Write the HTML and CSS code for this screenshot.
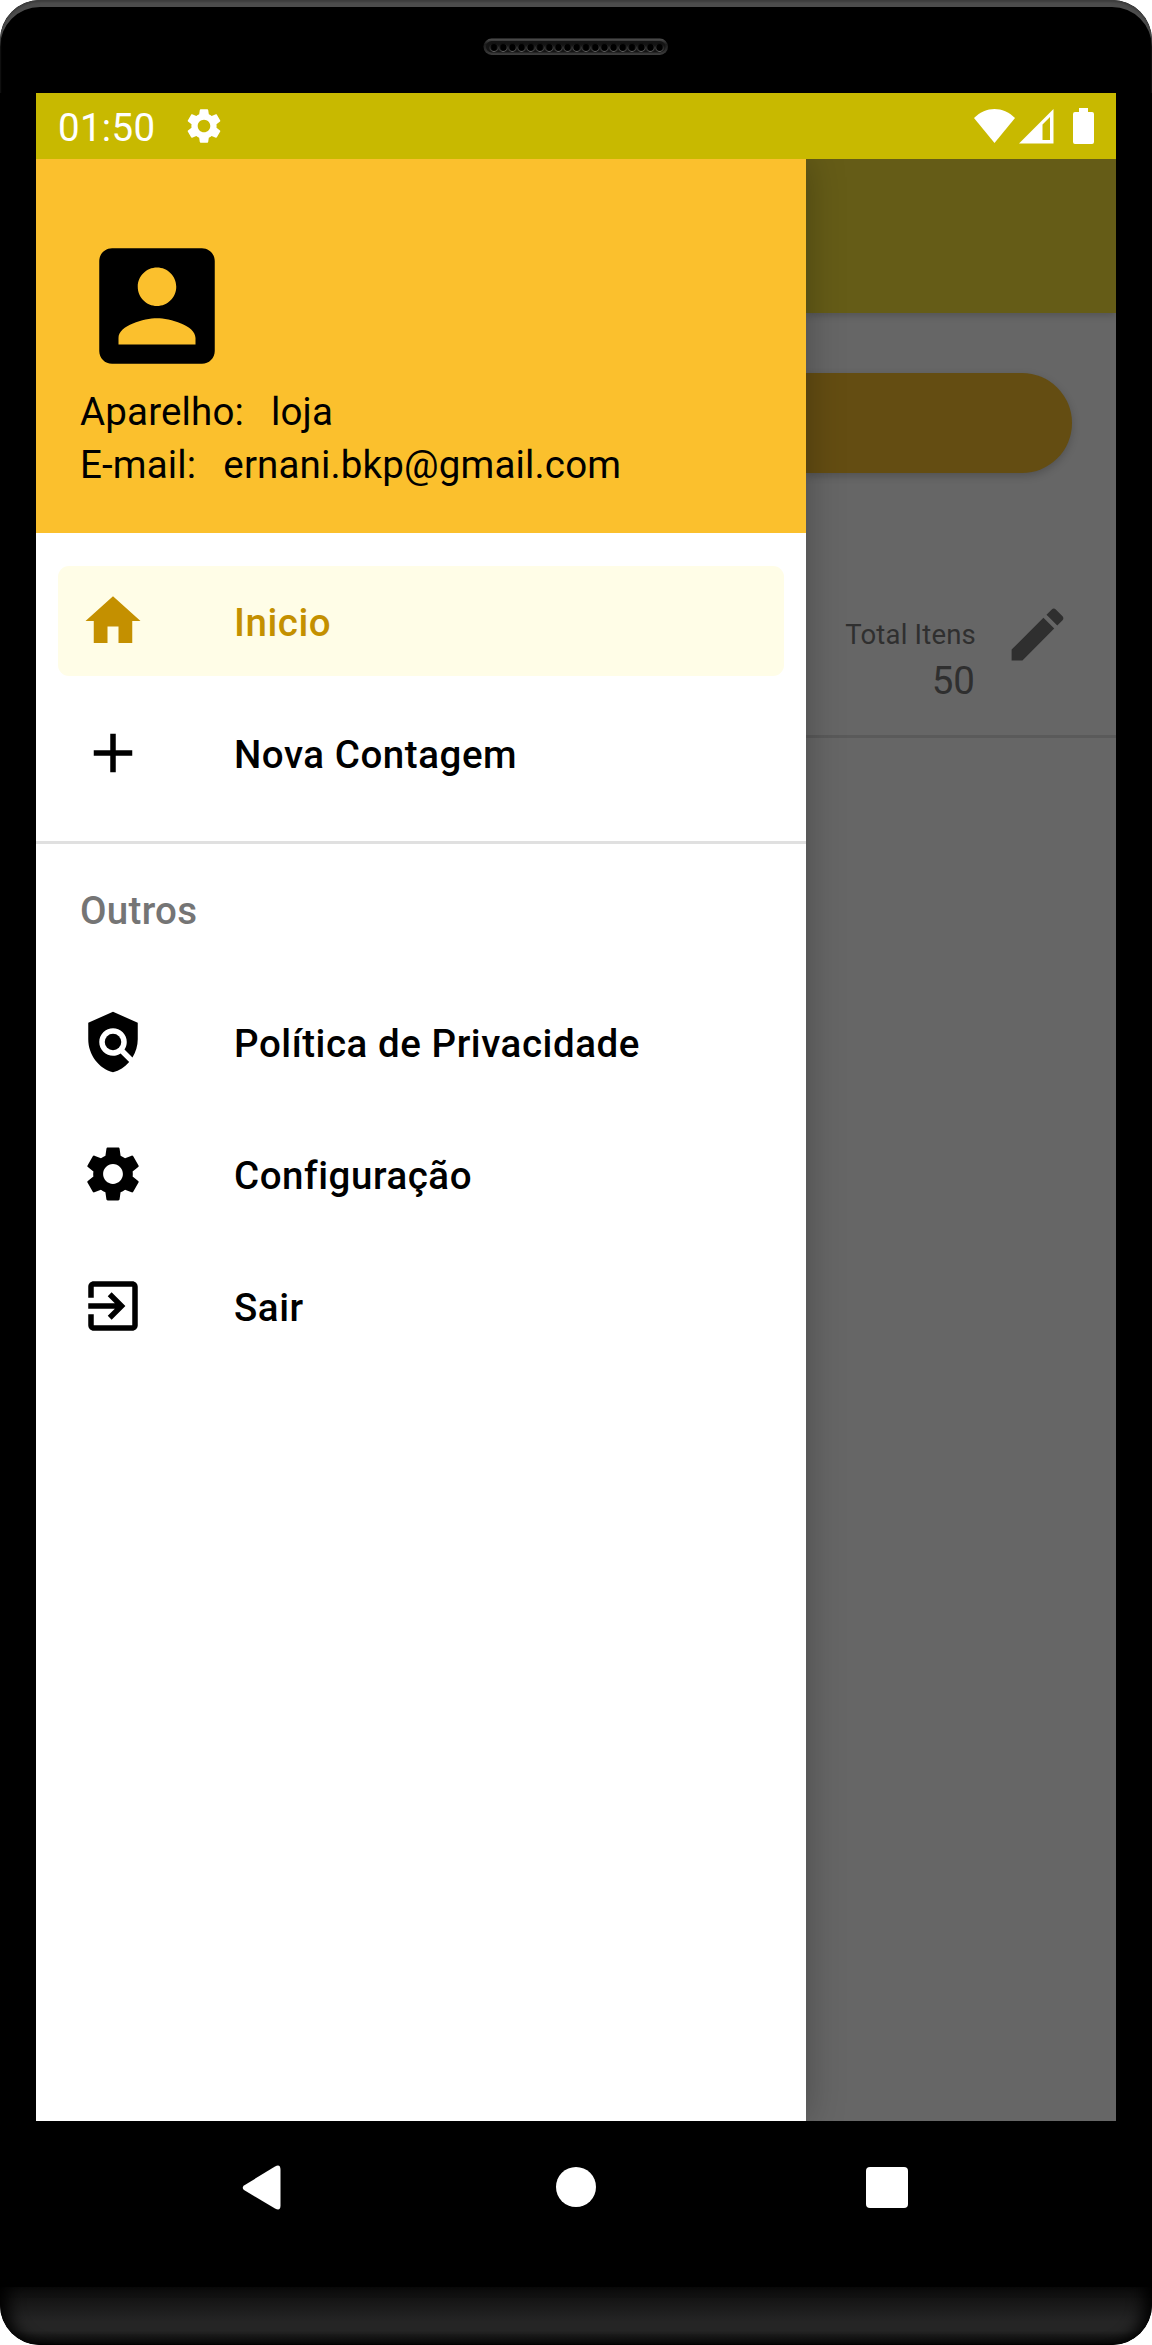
FILE: index.html
```html
<!DOCTYPE html>
<html lang="pt-BR">
<head>
<meta charset="utf-8">
<title>Contagem</title>
<link rel="stylesheet" href="styles.css">
</head>
<body>
<div class="phone">
  <div class="bezel">
    <svg class="speaker" width="186" height="18" viewBox="0 0 186 18">
      <defs>
        <linearGradient id="rim" x1="0" y1="0" x2="0" y2="1"><stop offset="0" stop-color="#505050"/><stop offset=".35" stop-color="#1c1c1c"/><stop offset="1" stop-color="#3c3c3c"/></linearGradient>
        <linearGradient id="hole" x1="0" y1="0" x2="0" y2="1"><stop offset="0" stop-color="#111"/><stop offset="1" stop-color="#666"/></linearGradient>
        <pattern id="holes" x="6.4" y="0" width="9.2" height="18" patternUnits="userSpaceOnUse"><circle cx="4.6" cy="9.500" r="3.900" fill="#000" stroke="url(#hole)" stroke-width="1"/></pattern>
      </defs>
      <rect x=".5" y=".5" width="184.500" height="16.500" rx="8.200" fill="url(#rim)"/>
      <rect x="3" y="3" width="179.500" height="11.500" rx="5.700" fill="#141414"/>
      <rect x="6.400" y="0" width="174.800" height="18" fill="url(#holes)"/>
    </svg>
  </div>

  <div class="screen">
    <header class="status">
      <span class="clock">01:50</span>
      <svg class="status-gear" viewBox="0 0 24 24"><use href="#gear"/></svg>
      <svg class="wifi" width="41" height="34" viewBox="0 0 41 34"><path d="M0 9C12-3 29-3 41 9L20.500 34Z"/></svg>
      <svg class="signal" width="35" height="35" viewBox="0 0 35 35"><path fill-rule="evenodd" d="M0 34.500L34.500 0V34.500ZM23.500 15.500V31H31V8Z"/></svg>
      <svg class="battery" width="21" height="36" viewBox="0 0 21 36"><path d="M6 0h9v4h4q2 0 2 2v28q0 2-2 2H2q-2 0-2-2V6q0-2 2-2h4Z"/></svg>
    </header>

    <div class="body">
      <aside class="drawer">
        <div class="account">
          <svg class="avatar" viewBox="0 0 24 24"><path d="M3 5v14c0 1.100.89 2 2 2h14c1.100 0 2-.9 2-2V5c0-1.100-.9-2-2-2H5c-1.110 0-2 .9-2 2zm12 4c0 1.660-1.340 3-3 3s-3-1.340-3-3 1.340-3 3-3 3 1.340 3 3zm-9 8c0-2 4-3.100 6-3.100s6 1.100 6 3.100v1H6v-1z"/></svg>
          <div class="field"><span>Aparelho:</span><span class="device">loja</span></div>
          <div class="field"><span>E-mail:</span><span class="email">ernani.bkp@gmail.com</span></div>
        </div>
        <nav class="menu">
          <a class="item active"><svg viewBox="0 0 24 24"><path d="M10 20v-6h4v6h5v-8h3L12 3 2 12h3v8z"/></svg><span>Inicio</span></a>
          <a class="item"><svg viewBox="0 0 24 24"><path d="M19 13h-6v6h-2v-6H5v-2h6V5h2v6h6v2z"/></svg><span>Nova Contagem</span></a>
        </nav>
        <nav class="menu others">
          <h2 class="group">Outros</h2>
          <a class="item"><svg viewBox="0 0 24 24"><path d="M21 5l-9-4-9 4v6c0 5.550 3.840 10.740 9 12 2.300-.56 4.330-1.900 5.880-3.710l-3.120-3.120c-1.940 1.290-4.580 1.070-6.290-.64-1.950-1.950-1.950-5.120 0-7.070 1.950-1.950 5.120-1.950 7.070 0 1.710 1.710 1.920 4.350.64 6.290l2.900 2.900C20.290 15.690 21 13.380 21 11V5z"/><circle cx="12" cy="12" r="3"/></svg><span>Política de Privacidade</span></a>
          <a class="item"><svg viewBox="0 0 24 24"><path id="gear" d="M19.140 12.940c.04-.3.060-.61.060-.94 0-.32-.02-.64-.07-.94l2.030-1.580c.18-.14.230-.41.120-.61l-1.920-3.320c-.12-.22-.37-.29-.59-.22l-2.390.96c-.5-.38-1.030-.7-1.620-.94l-.36-2.540c-.04-.24-.24-.41-.48-.41h-3.840c-.24 0-.43.170-.47.410l-.36 2.540c-.59.240-1.130.570-1.620.940l-2.390-.96c-.22-.08-.47 0-.59.220L2.740 8.870c-.12.210-.08.470.12.610l2.030 1.580c-.05.300-.09.630-.09.940s.020.640.070.940l-2.030 1.580c-.18.140-.23.410-.12.610l1.920 3.320c.12.220.37.290.59.220l2.390-.96c.5.380 1.030.7 1.620.94l.36 2.540c.05.240.24.410.48.410h3.840c.24 0 .44-.17.470-.41l.36-2.540c.59-.24 1.130-.56 1.620-.94l2.390.96c.22.080.47 0 .59-.22l1.920-3.320c.12-.22.070-.47-.12-.61l-2.010-1.580zM12 15.600c-1.980 0-3.600-1.620-3.600-3.600s1.620-3.600 3.600-3.600 3.600 1.620 3.600 3.600-1.620 3.600-3.600 3.600z"/></svg><span>Configuração</span></a>
          <a class="item"><svg viewBox="0 0 24 24"><path d="M10.090 15.590L11.500 17l5-5-5-5-1.410 1.410L12.670 11H3v2h9.670l-2.580 2.590zM19 3H5c-1.110 0-2 .9-2 2v4h2V5h14v14H5v-4H3v4c0 1.100.89 2 2 2h14c1.100 0 2-.9 2-2V5c0-1.100-.9-2-2-2z"/></svg><span>Sair</span></a>
        </nav>
      </aside>

      <main class="content">
        <div class="toolbar"></div>
        <div class="action"></div>
        <section class="row">
          <div class="total"><span class="label">Total Itens</span><span class="value">50</span></div>
          <svg class="edit" viewBox="0 0 24 24"><path d="M3 17.250V21h3.750L17.810 9.940l-3.750-3.750L3 17.250zM20.710 7.040c.39-.39.39-1.020 0-1.410l-2.340-2.340c-.39-.39-1.020-.39-1.410 0l-1.830 1.830 3.750 3.750 1.830-1.830z"/></svg>
        </section>
      </main>
    </div>
  </div>

  <footer class="navbar">
    <svg width="40" height="46" viewBox="0 0 40 46"><path d="M2 20.500L33 1.500Q38.500-1.500 38.500 5V40.500Q38.500 46.500 33 43.500L2 25Q-.5 22.700 2 20.500Z"/></svg>
    <span class="home"></span>
    <span class="recents"></span>
  </footer>
  <div class="chin"></div>
</div>
</body>
</html>
```
FILE: styles.css
```css
* { box-sizing: border-box; }

body {
  margin: 0;
  background: #fff;
  font-family: Roboto, sans-serif;
  font-size: 38.5px;
  line-height: 53px;
  color: #000;
}

svg { display: block; flex: none; fill: currentColor; }

.phone {
  width: 1152px;
  height: 2345px;
  display: flex;
  flex-direction: column;
  background: #000;
  border-radius: 40px;
  overflow: hidden;
}

.bezel {
  height: 93px;
  flex: none;
  padding: 38px 0 0 483px;
  border-radius: 40px 40px 0 0;
  box-shadow: inset 0 2px 2px #3c3c3c, inset 0 7px 0 #4c4c4c;
}

.screen {
  width: 1080px;
  height: 2028px;
  flex: none;
  margin: 0 36px;
  display: flex;
  flex-direction: column;
  overflow: hidden;
}

.status {
  height: 66px;
  flex: none;
  display: flex;
  align-items: center;
  padding: 0 22px;
  background: #c8b900;
  color: #fff;
}
.clock { width: 125px; padding-top: 3px; letter-spacing: .3px; }
.status-gear { width: 42px; height: 42px; }
.wifi { margin-left: auto; }
.signal { margin-left: 4px; }
.battery { margin-left: 19px; }

.body { display: flex; flex: 1; overflow: hidden; }

.drawer {
  width: 770px;
  flex: none;
  background: #fff;
  z-index: 1;
  box-shadow: 0 0 36px rgba(0, 0, 0, .28);
}

.account {
  height: 374px;
  padding: 70px 44px 0;
  background: #fbc02d;
}
.avatar { width: 154px; height: 154px; margin-bottom: 2px; }
.field { display: flex; height: 53px; letter-spacing: .15px; }
.device { margin-left: 27px; }
.email { margin-left: 27px; }

.menu { padding: 22px 0; font-weight: 500; letter-spacing: .55px; }
.others { padding-top: 0; border-top: 3px solid #e0e0e0; }
.item {
  height: 110px;
  margin: 11px 22px;
  padding: 0 22px;
  display: flex;
  align-items: center;
  gap: 88px;
  border-radius: 11px;
}
.menu .item + .item { margin-top: 22px; }
.item svg { width: 66px; height: 66px; }
.item span { padding-top: 3px; white-space: nowrap; }
.active { background: #fffde7; color: #c49000; }
.group {
  height: 132px;
  margin: 0;
  padding: 0 44px;
  font-size: 38.5px;
  font-weight: 500;
  line-height: 133px;
  letter-spacing: .3px;
  color: #757575;
}

.content { flex: 1; background: #666; }
.toolbar {
  height: 154px;
  background: #655c17;
  box-shadow: 0 2px 8px rgba(0, 0, 0, .2);
}
.action {
  height: 100px;
  margin: 60px 44px 0 0;
  background: #644d12;
  border-radius: 0 50px 50px 0;
  box-shadow: 0 3px 8px rgba(0, 0, 0, .2);
}
.row {
  height: 265px;
  display: flex;
  align-items: flex-start;
  justify-content: flex-end;
  padding: 127px 44px 0 0;
  border-bottom: 3px solid #5a5a5a;
  color: #2f2f2f;
}
.total { display: flex; flex-direction: column; align-items: flex-end; padding-top: 16px; margin-right: 27px; }
.label { font-size: 27.5px; line-height: 38px; letter-spacing: .2px; }
.value { margin-right: 1px; }
.edit { width: 69px; height: 69px; }

.navbar {
  height: 166px;
  flex: none;
  display: flex;
  align-items: flex-start;
  padding: 44px 0 0 242px;
  color: #fff;
}
.home { width: 40px; height: 40px; margin: 2px 0 0 274px; border-radius: 50%; background: #fff; }
.recents { width: 42px; height: 41px; margin: 2px 0 0 270px; border-radius: 4px; background: #fff; }

.chin {
  height: 58px;
  flex: none;
  border-radius: 0 0 40px 40px;
  background: linear-gradient(#0c0c0c, #252525 60%, #252525 75%, #0a0a0a 97%, #000);
  box-shadow: inset 16px 0 16px -8px #000, inset -16px 0 16px -8px #000;
}
```
